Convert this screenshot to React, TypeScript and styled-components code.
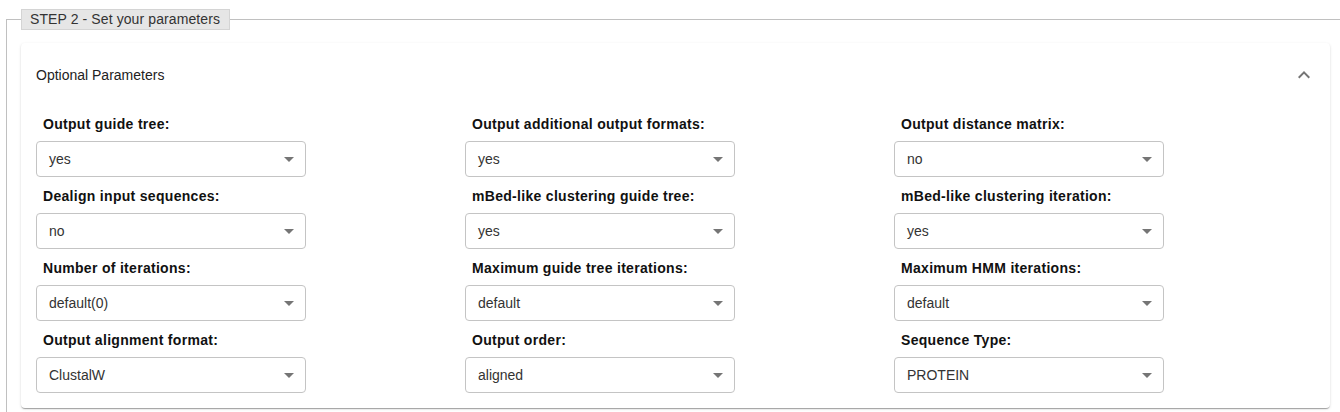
import styled, { createGlobalStyle } from 'styled-components';

const GlobalStyle = createGlobalStyle`
   html, body {
      margin: 0;
      padding: 0;
      background: #fff;
      overflow: hidden;
      font-family: "Liberation Sans", Arial, sans-serif;
   }
`

const fields = [
   { label: 'Output guide tree:', value: 'yes' },
   { label: 'Output additional output formats:', value: 'yes' },
   { label: 'Output distance matrix:', value: 'no' },
   { label: 'Dealign input sequences:', value: 'no' },
   { label: 'mBed-like clustering guide tree:', value: 'yes' },
   { label: 'mBed-like clustering iteration:', value: 'yes' },
   { label: 'Number of iterations:', value: 'default(0)' },
   { label: 'Maximum guide tree iterations:', value: 'default' },
   { label: 'Maximum HMM iterations:', value: 'default' },
   { label: 'Output alignment format:', value: 'ClustalW' },
   { label: 'Output order:', value: 'aligned' },
   { label: 'Sequence Type:', value: 'PROTEIN' },
];

const ArrowDown = () => (
   <svg width='24' height='24' viewBox='0 0 24 24' fill='#757575'>
      <path d='M7 10l5 5 5-5z' />
   </svg>
)

const ExpandLess = () => (
   <svg width='24' height='24' viewBox='0 0 24 24' fill='#757575'>
      <path d='M12 8l-6 6 1.41 1.41L12 10.83l4.59 4.58L18 14z' />
   </svg>
)

export default function App() {
   return (<>
      <GlobalStyle />
      <Fieldset>
         <Legend>STEP 2 - Set your parameters</Legend>
         <Card>
            <CardHeader>
               <span>Optional Parameters</span>
               <ExpandLess />
            </CardHeader>
            <Grid>
               {
                  fields.map((f) => (
                     <Field key={f.label}>
                        <Label>{f.label}</Label>
                        <Select>
                           <span>{f.value}</span>
                           <ArrowDown />
                        </Select>
                     </Field>
                  ))
               }
            </Grid>
         </Card>
      </Fieldset>
   </>
   )
}

const Fieldset = styled.fieldset`
   margin: 9px 0 0 6px;
   padding: 13px 0 8px 14px;
   border: 1px solid #c0c0c0;
   border-right: none;
   min-width: 0;
`
const Legend = styled.legend`
   background: #e6e6e6;
   border: 1px solid #d4d4d4;
   padding: 0 9px 0 8px;
   margin-left: 0;
   font-size: 14px;
   line-height: 19px;
   color: #333;
   letter-spacing: 0.1px;
`
const Card = styled.div`
   width: 1309px;
   background: #fff;
   border-radius: 4px;
   box-shadow: 0px 2px 1px -1px rgba(0,0,0,0.2), 0px 1px 1px 0px rgba(0,0,0,0.14), 0px 1px 3px 0px rgba(0,0,0,0.12);
   padding-bottom: 15px;
`
const CardHeader = styled.div`
   height: 64px;
   display: flex;
   align-items: center;
   justify-content: space-between;
   padding: 0 14px 0 15px;
   font-size: 14px;
   color: #222;
`
const Grid = styled.div`
   display: grid;
   grid-template-columns: repeat(3, 429px);
   padding: 7px 15px 0;
`
const Field = styled.div`
   display: flex;
   flex-direction: column;
   margin-bottom: 9px;
   &:nth-last-child(-n+3) {
      margin-bottom: 0;
   }
`
const Label = styled.label`
   font-size: 14px;
   font-weight: bold;
   line-height: 20px;
   color: #111;
   padding-left: 7px;
   margin-bottom: 7px;
   letter-spacing: 0.3px;
`
const Select = styled.div`
   width: 270px;
   height: 36px;
   box-sizing: border-box;
   border: 1px solid #c4c4c4;
   border-radius: 4px;
   display: flex;
   align-items: center;
   justify-content: space-between;
   padding: 0 4px 0 12px;
   font-size: 14px;
   color: #333;
   cursor: pointer;
`
